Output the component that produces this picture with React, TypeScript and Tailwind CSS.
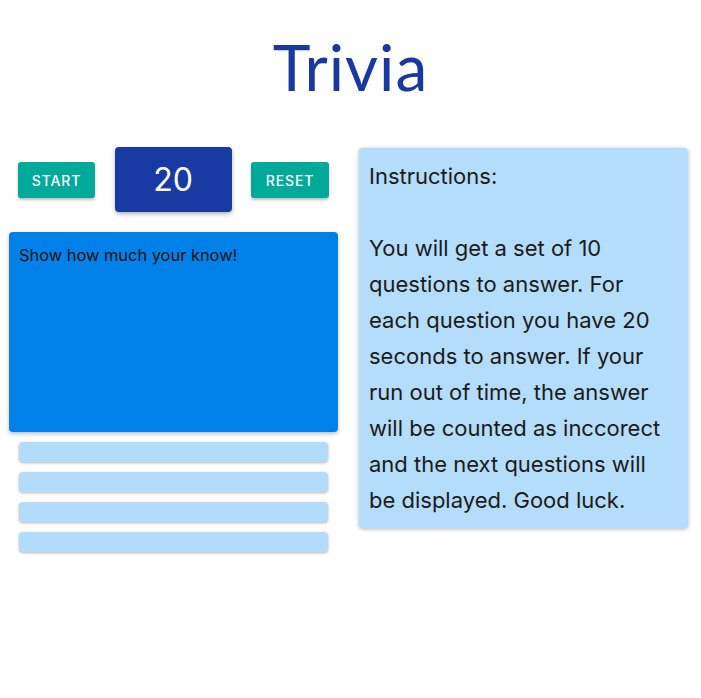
import React from "react";

const answers = ["", "", "", ""];

const App: React.FC = () => {
  return (
    <div className="min-h-screen bg-white font-['Inter',sans-serif]">
      <h1 className="pt-[27px] text-center font-['Lato',sans-serif] text-[64px] leading-[80px] tracking-[1px] text-[#1939a0]">
        Trivia
      </h1>
      <div className="mt-[40px] grid w-[679px] grid-cols-2 gap-[21px] pl-[9px] box-content">
        <div className="flex flex-col">
          <div className="flex h-[65px] items-center justify-between px-[9px]">
            <button className="h-[36px] w-[77px] rounded-[3px] bg-[#00a99a] pt-[2px] text-[14px] font-medium tracking-[0.9px] text-white shadow-[0_2px_3px_rgba(0,0,0,0.25)]">
              START
            </button>
            <div className="flex h-[65px] w-[117px] items-center justify-center rounded-[4px] bg-[#1939a3] text-[32px] text-white shadow-[0_2px_4px_rgba(0,0,0,0.3)]">
              20
            </div>
            <button className="h-[36px] w-[78px] rounded-[3px] bg-[#00a99a] pt-[2px] text-[14px] font-medium tracking-[0.9px] text-white shadow-[0_2px_3px_rgba(0,0,0,0.25)]">
              RESET
            </button>
          </div>
          <div className="mt-[20px] h-[200px] rounded-[4px] bg-[#0081e8] px-[10px] py-[13px] text-[16.4px] leading-[20px] text-[#111] shadow-[0_2px_4px_rgba(0,0,0,0.25)]">
            Show how much your know!
          </div>
          <div className="mt-[10px] flex flex-col gap-[10px] px-[10px]">
            {answers.map((a, i) => (
              <div
                key={i}
                className="h-[20px] rounded-[4px] bg-[#b3dcfa] shadow-[0_1px_3px_rgba(0,0,0,0.3)]"
              >
                {a}
              </div>
            ))}
          </div>
        </div>
        <div className="self-start">
          <div className="mt-[1px] rounded-[4px] bg-[#b3ddfa] py-[10px] pl-[10px] pr-[11px] text-[22px] leading-[36px] text-[#1b1b1b] shadow-[0_1px_4px_rgba(0,0,0,0.3)]">
            <p>Instructions:</p>
            <p className="h-[36px]"></p>
            <p>
              You will get a set of 10 questions to answer. For each question
              you have 20 seconds to answer. If your run out of time, the
              answer will be counted as inccorect and the next questions will
              be displayed. Good luck.
            </p>
          </div>
        </div>
      </div>
    </div>
  );
};

export default App;
